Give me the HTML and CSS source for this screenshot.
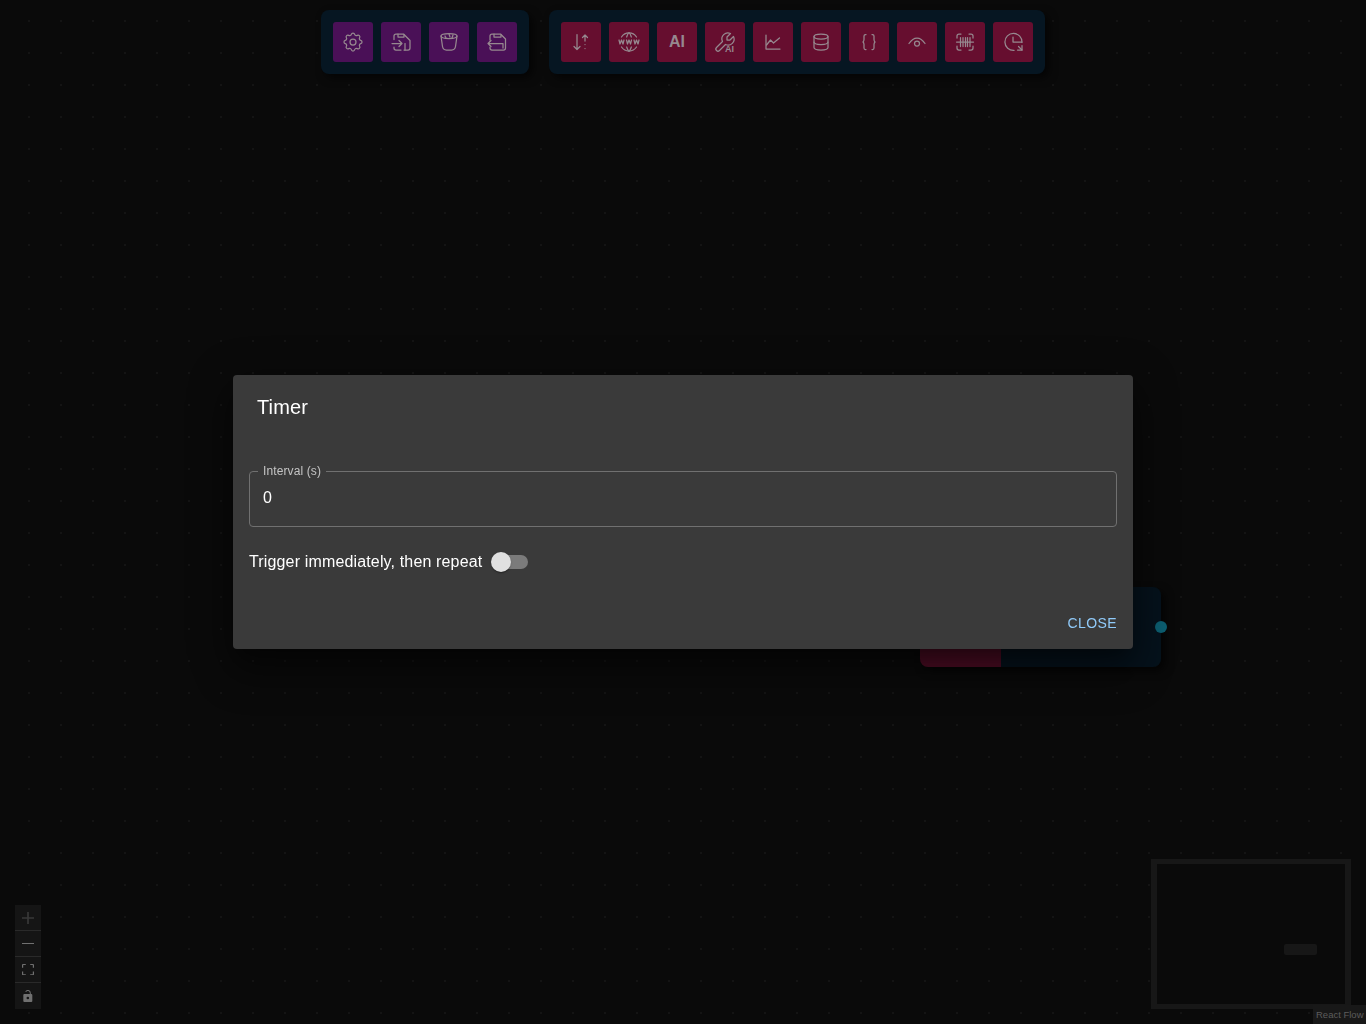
FILE: index.html
```html
<!DOCTYPE html>
<html lang="en">
<head>
<meta charset="utf-8">
<title>Timer</title>
<link rel="stylesheet" href="styles.css">
</head>
<body>
<div class="canvas">
  <div class="toolbar">
    <div class="panel">
      <button class="tool purple"><svg class="ic" viewBox="0 0 24 24"><path d="M10.325 4.317c.426-1.756 2.924-1.756 3.35 0a1.724 1.724 0 0 0 2.573 1.066c1.543-.94 3.31.826 2.37 2.37a1.724 1.724 0 0 0 1.065 2.572c1.756.426 1.756 2.924 0 3.35a1.724 1.724 0 0 0-1.066 2.573c.94 1.543-.826 3.31-2.37 2.37a1.724 1.724 0 0 0-2.572 1.065c-.426 1.756-2.924 1.756-3.35 0a1.724 1.724 0 0 0-2.573-1.066c-1.543.94-3.31-.826-2.37-2.37a1.724 1.724 0 0 0-1.065-2.572c-1.756-.426-1.756-2.924 0-3.35a1.724 1.724 0 0 0 1.066-2.573c-.94-1.543.826-3.31 2.37-2.37c1 .608 2.296.07 2.572-1.065z"/><circle cx="12" cy="12" r="3"/></svg></button>
      <button class="tool purple"><svg class="ic" viewBox="0 0 24 24"><path d="M5 9.500V6a2 2 0 0 1 2-2h7.500L21 10.500V18a2 2 0 0 1-2 2h-4"/><path d="M9 4v3h6V4.500"/><path d="M3 13.500h10M10 10.500l3 3-3 3"/><path d="M16 13.500V20"/><path d="M5 17v1a2 2 0 0 0 2 2h5"/></svg></button>
      <button class="tool purple"><svg class="ic" viewBox="0 0 24 24"><ellipse cx="12" cy="6" rx="8" ry="2.500"/><path d="M4 6l1.500 10.500c.3 2 2 3.500 4 3.500h5c2 0 3.700-1.500 4-3.500L20 6"/><path d="M8 6l1 2M12 4l1 3M16 5l-1 3"/></svg></button>
      <button class="tool purple"><svg class="ic" viewBox="0 0 24 24"><path d="M5 10V6a2 2 0 0 1 2-2h8.500l5 5v9a2 2 0 0 1-2 2H7a2 2 0 0 1-2-2v-1"/><path d="M9 4v3h7V4.500"/><path d="M18 18v-4.500H3M6 10.500l-3 3 3 3"/></svg></button>
    </div>
    <div class="panel">
      <button class="tool red"><svg class="ic" viewBox="0 0 24 24"><path d="M8 4.500v15M5 16.500l3 3 3-3"/><path d="M16 11V5M13.500 7.500L16 5l2.500 2.500"/><path d="M16 14.500v.01M16 18.500v.01"/></svg></button>
      <button class="tool red"><svg class="ic" viewBox="0 0 24 24"><path d="M19.500 7a9 9 0 0 0-7.500-4 8.991 8.991 0 0 0-7.484 4"/><path d="M11.500 3a16.989 16.989 0 0 0-1.826 4"/><path d="M12.500 3a16.989 16.989 0 0 1 1.828 4"/><path d="M19.500 17a9 9 0 0 1-7.500 4 8.991 8.991 0 0 1-7.484-4"/><path d="M11.500 21a16.989 16.989 0 0 1-1.826-4"/><path d="M12.500 21a16.989 16.989 0 0 0 1.828-4"/><path d="M2 10l1 4 1.500-4 1.500 4 1-4"/><path d="M17 10l1 4 1.500-4 1.500 4 1-4"/><path d="M9.500 10l1 4 1.500-4 1.500 4 1-4"/></svg></button>
      <button class="tool red"><span class="ai-big">AI</span></button>
      <button class="tool red"><svg class="ic" viewBox="0 0 24 24"><path transform="matrix(-1 0 0 1 24 0)" d="M7 10h3V7L6.500 3.500a6 6 0 0 1 8 8l6 6a2 2 0 0 1-3 3l-6-6a6 6 0 0 1-8-8L7 10"/></svg><span class="ai-small">AI</span></button>
      <button class="tool red"><svg class="ic" viewBox="0 0 24 24"><path d="M5 5v14h14"/><path d="M5.500 15l4-5 3 3 6-5"/></svg></button>
      <button class="tool red"><svg class="ic" viewBox="0 0 24 24"><ellipse cx="12" cy="6.500" rx="7" ry="2.500"/><path d="M5 6.500v11c0 1.400 3.100 2.500 7 2.500s7-1.100 7-2.500v-11"/><path d="M5 12c0 1.400 3.100 2.500 7 2.500s7-1.100 7-2.500"/></svg></button>
      <button class="tool red"><svg class="ic" viewBox="0 0 24 24"><path d="M9 4.500h-.5A1.500 1.500 0 0 0 7 6v3.500c0 1-.5 2-1 2.500.5.5 1 1.500 1 2.500V18a1.500 1.500 0 0 0 1.500 1.500H9"/><path d="M15 4.500h.5A1.500 1.500 0 0 1 17 6v3.500c0 1 .5 2 1 2.500-.5.5-1 1.500-1 2.500V18a1.500 1.500 0 0 1-1.500 1.500H15"/></svg></button>
      <button class="tool red"><svg class="ic" viewBox="0 0 24 24"><circle cx="12" cy="13.500" r="2.500"/><path d="M4 13.500C6.300 10 8.900 8 12 8s5.700 2 8 5.500"/></svg></button>
      <button class="tool red"><svg class="ic" viewBox="0 0 24 24"><path d="M4 8V6a2 2 0 0 1 2-2h2M16 4h2a2 2 0 0 1 2 2v2M4 16v2a2 2 0 0 0 2 2h2M16 20h2a2 2 0 0 0 2-2v-2"/><path d="M3.500 12h17"/><path d="M7.500 7.500v9M10 7.500v9M12.500 7.500v9M14.500 7.500v9M17 7.500v9"/></svg></button>
      <button class="tool red"><svg class="ic" viewBox="0 0 24 24"><path d="M20.900 12.500A8.500 8.500 0 1 0 13 20.400"/><path d="M12 7v5h8.900"/><path d="M21 15.500V20h-4.500"/><path d="M21 20l-3.500-3.500"/></svg></button>
    </div>
  </div>

  <div class="node">
    <div class="node-tag"></div>
    <div class="node-body"></div>
    <div class="node-handle"></div>
  </div>

  <div class="controls">
    <button class="ctl ctl-dim"><svg viewBox="0 0 32 32"><path d="M32 18.300H18.300V32h-4.600V18.300H0v-4.600h13.700V0h4.600v13.700H32z"/></svg></button>
    <button class="ctl"><svg viewBox="0 0 32 5"><path d="M0 0h32v4.600H0z"/></svg></button>
    <button class="ctl"><svg viewBox="0 0 32 30"><path d="M3.700 27.200a.5.500 0 0 1-.5-.5v-6.900H0v7.400A2.700 2.700 0 0 0 2.700 30h7.400v-2.800zM28.800 26.700a.5.500 0 0 1-.5.500h-6.400V30h7.400a2.700 2.700 0 0 0 2.700-2.700v-7.500h-3.200zM29.300 0h-7.400v2.800h6.400a.5.500 0 0 1 .5.500v6.900H32V2.700A2.700 2.700 0 0 0 29.300 0zM0 10.200h3.200V3.300a.5.500 0 0 1 .5-.5h6.400V0H2.700A2.700 2.700 0 0 0 0 2.700z"/></svg></button>
    <button class="ctl"><svg viewBox="0 0 25 32"><path d="M21.300 10.700H20V8a8 8 0 0 0-14.900-4l2.300 1.300A5.300 5.300 0 0 1 17.300 8v2.700H2.700A2.700 2.700 0 0 0 0 13.300v16A2.700 2.700 0 0 0 2.700 32h18.600a2.700 2.700 0 0 0 2.700-2.700v-16a2.700 2.700 0 0 0-2.700-2.600zM12 24.800a3.500 3.500 0 1 1 0-7 3.500 3.500 0 0 1 0 7z"/></svg></button>
  </div>

  <div class="minimap">
    <div class="mini-node"></div>
  </div>
  <div class="attribution">React Flow</div>
</div>

<div class="modal">
  <div class="dialog">
    <h2 class="dialog-title">Timer</h2>
    <div class="dialog-content">
      <fieldset class="field">
        <legend class="field-legend">Interval (s)</legend>
        <span class="field-value">0</span>
      </fieldset>
      <div class="switch-row">
        <span class="switch-label">Trigger immediately, then repeat</span>
        <span class="switch"><span class="switch-track"></span><span class="switch-thumb"></span></span>
      </div>
    </div>
    <div class="dialog-actions">
      <button class="close-btn">CLOSE</button>
    </div>
  </div>
</div>
</body>
</html>
```
FILE: styles.css
```css
* { box-sizing: border-box; }
html, body { margin: 0; height: 100%; }
body {
  font-family: "Liberation Sans", Arial, sans-serif;
  background: #0a0a0a;
  overflow: hidden;
}
button { font: inherit; border: 0; padding: 0; }
.canvas {
  position: relative;
  width: 1366px;
  height: 1024px;
  background-color: #0a0a0a;
  background-image: radial-gradient(circle at 1px 1px, #141414 1px, transparent 1px);
  background-size: 32px 32px;
  background-position: 28px 20px;
}
.toolbar {
  position: absolute;
  top: 10px;
  left: 321px;
  display: flex;
  gap: 20px;
}
.panel {
  display: flex;
  gap: 8px;
  padding: 12px;
  background: #061622;
  border-radius: 8px;
  box-shadow: 4px 4px 8px rgba(0,0,0,.6);
}
.tool {
  position: relative;
  width: 40px;
  height: 40px;
  border-radius: 3px;
  display: flex;
  align-items: center;
  justify-content: center;
}
.purple { background: #4a1057; }
.red { background: #660e2f; }
.ic {
  width: 24px;
  height: 24px;
  fill: none;
  stroke: #96888f;
  stroke-width: 1.25;
  stroke-linecap: round;
  stroke-linejoin: round;
}
.ai-big { font-size: 16px; font-weight: 700; color: #96888f; }
.ai-small {
  position: absolute;
  right: 11px;
  bottom: 8px;
  font-size: 9px;
  line-height: 10px;
  font-weight: 700;
  color: #96888f;
}
.node {
  position: absolute;
  left: 920px;
  top: 587px;
  width: 241px;
  height: 80px;
  display: flex;
  border-radius: 8px;
  box-shadow: 4px 4px 8px rgba(0,0,0,.6);
}
.node-tag { width: 81px; background: #4e0c24; border-radius: 8px 0 0 8px; }
.node-body { flex: 1; background: #05121c; border-radius: 0 8px 8px 0; }
.node-handle {
  position: absolute;
  right: -6px;
  top: 34px;
  width: 12px;
  height: 12px;
  border-radius: 50%;
  background: #0c5f72;
}
.controls {
  position: absolute;
  left: 15px;
  top: 905px;
  width: 26px;
  display: flex;
  flex-direction: column;
}
.ctl {
  height: 26px;
  background: #151515;
  border-bottom: 1px solid #2a2a2a;
  display: flex;
  align-items: center;
  justify-content: center;
}
.ctl:last-child { border-bottom: 0; }
.ctl svg { width: 12px; max-height: 12px; fill: #707070; }
.ctl-dim svg { fill: #383838; }
.minimap {
  position: absolute;
  left: 1151px;
  top: 859px;
  width: 200px;
  height: 150px;
  background: #0a0a0a;
  border-style: solid;
  border-color: #171717;
  border-width: 5px 6px;
}
.mini-node {
  position: absolute;
  left: 127px;
  top: 80px;
  width: 33px;
  height: 11px;
  background: #171717;
  border-radius: 2px;
}
.attribution {
  position: absolute;
  right: 0;
  bottom: 0;
  width: 53px;
  height: 19px;
  padding: 4px 0 0 3px;
  font-size: 9.500px;
  line-height: 12px;
  color: #5c5c5c;
  background: #181818;
  white-space: nowrap;
}
.modal {
  position: fixed;
  inset: 0;
  display: flex;
  align-items: center;
  justify-content: center;
}
.dialog {
  width: 900px;
  height: 274px;
  background: #3a3a3a;
  border-radius: 4px;
  color: #fff;
  display: flex;
  flex-direction: column;
  box-shadow: 0 11px 15px -7px rgba(0,0,0,.3), 0 24px 38px 3px rgba(0,0,0,.3), 0 9px 40px 6px rgba(0,0,0,.25);
}
.dialog-title {
  margin: 0;
  padding: 16px 24px;
  font-size: 20px;
  font-weight: 400;
  line-height: 32px;
  height: 64px;
  letter-spacing: .15px;
}
.dialog-content {
  flex: 1;
  padding: 26px 16px 0;
  display: flex;
  flex-direction: column;
}
.field {
  margin: 0;
  padding: 0 14px 0 8px;
  height: 62px;
  flex: none;
  border: 1px solid #707070;
  border-radius: 4px;
  min-width: 0;
}
.field-legend {
  padding: 0 5px;
  font-size: 12px;
  line-height: 12px;
  height: 12px;
  letter-spacing: .11px;
  color: #c4c4c4;
}
.field-value {
  display: block;
  padding: 9px 0 0 5px;
  font-size: 16px;
  line-height: 24px;
  letter-spacing: .15px;
}
.switch-row {
  display: flex;
  align-items: center;
  margin-top: 16px;
  height: 38px;
  flex: none;
}
.switch-label { font-size: 16px; line-height: 24px; letter-spacing: .15px; }
.switch {
  position: relative;
  width: 38px;
  height: 22px;
  margin-left: 9px;
}
.switch-track {
  position: absolute;
  left: 3px;
  top: 4px;
  width: 34px;
  height: 14px;
  border-radius: 7px;
  background: #7b7b7b;
}
.switch-thumb {
  position: absolute;
  left: 0;
  top: 1px;
  width: 20px;
  height: 20px;
  border-radius: 50%;
  background: #e0e0e0;
  box-shadow: 0 2px 1px -1px rgba(0,0,0,.2), 0 1px 1px rgba(0,0,0,.14), 0 1px 3px rgba(0,0,0,.12);
}
.dialog-actions {
  display: flex;
  justify-content: flex-end;
  padding: 8px;
}
.close-btn {
  background: none;
  color: #90caf9;
  font-size: 14px;
  line-height: 26px;
  padding: 7px 8px 5px;
  letter-spacing: .4px;
}
```
